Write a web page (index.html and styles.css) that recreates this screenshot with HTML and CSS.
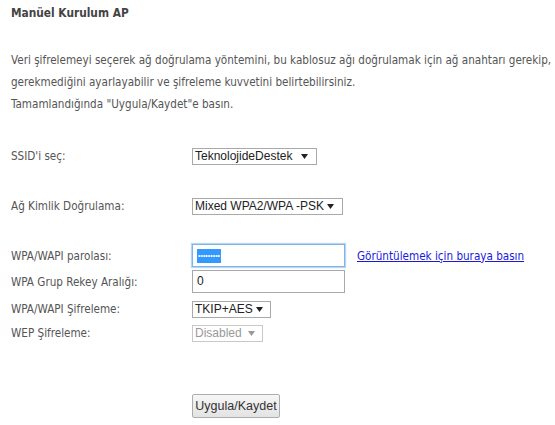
FILE: index.html
```html
<!DOCTYPE html>
<html lang="tr">

<head>
	<meta charset="UTF-8">
	<meta name="viewport" content="width=device-width, initial-scale=1.0">
	<title>Manüel Kurulum AP</title>
	<link rel="stylesheet" href="styles.css">
</head>

<body>
	<h3 class="title">Manüel Kurulum AP</h3>

	<p class="intro">
		Veri şifrelemeyi seçerek ağ doğrulama yöntemini, bu kablosuz ağı doğrulamak için ağ anahtarı gerekip,<br>
		gerekmediğini ayarlayabilir ve şifreleme kuvvetini belirtebilirsiniz.<br>
		Tamamlandığında "Uygula/Kaydet"e basın.
	</p>

	<form class="form">
		<div class="row row-ssid">
			<span class="label">SSID'i seç:</span>
			<div class="sel sel-ssid">
				<span>TeknolojideDestek</span>
				<svg class="arrow" width="7" height="5" viewBox="0 0 7 5"><path d="M0 0H7L3.5 5Z" /></svg>
			</div>
		</div>

		<div class="row row-auth">
			<span class="label">Ağ Kimlik Doğrulama:</span>
			<div class="sel sel-auth">
				<span>Mixed WPA2/WPA -PSK</span>
				<svg class="arrow" width="7" height="5" viewBox="0 0 7 5"><path d="M0 0H7L3.5 5Z" /></svg>
			</div>
		</div>

		<div class="row row-key">
			<span class="label">WPA/WAPI parolası:</span>
			<div class="field field-focus">
				<span class="picked">•••••••••</span>
			</div>
			<a class="show-link" href="#">Görüntülemek için buraya basın</a>
		</div>

		<div class="row row-rekey">
			<span class="label">WPA Grup Rekey Aralığı:</span>
			<div class="field">0</div>
		</div>

		<div class="row row-enc">
			<span class="label">WPA/WAPI Şifreleme:</span>
			<div class="sel sel-enc">
				<span>TKIP+AES</span>
				<svg class="arrow" width="7" height="5" viewBox="0 0 7 5"><path d="M0 0H7L3.5 5Z" /></svg>
			</div>
		</div>

		<div class="row row-wep">
			<span class="label">WEP Şifreleme:</span>
			<div class="sel sel-wep sel-off">
				<span>Disabled</span>
				<svg class="arrow" width="7" height="5" viewBox="0 0 7 5"><path d="M0 0H7L3.5 5Z" /></svg>
			</div>
		</div>

		<div class="row row-save">
			<span class="label"></span>
			<button class="save" type="button">Uygula/Kaydet</button>
		</div>
	</form>
</body>

</html>
```

FILE: styles.css
```css
body {
	margin: 0;
	padding: 4px 0 0 11px;
	background-color: #fff;
	color: #555;
	font-family: "DejaVu Sans Condensed", "DejaVu Sans", sans-serif;
	font-stretch: condensed;
	font-size: 11.6px;
}

.title {
	margin: 0;
	font-size: 11.8px;
	line-height: 18px;
	font-weight: bold;
	color: #444;
}

.intro {
	margin: 27px 0 0 0;
	line-height: 22px;
	white-space: nowrap;
}

.form {
	margin-top: 31px;
}

.row {
	display: flex;
	align-items: center;
}

.label {
	width: 181px;
	flex-shrink: 0;
}

.row-ssid {
	height: 20px;
}

.row-auth {
	height: 20px;
	margin-top: 30px;
}

.row-key {
	height: 25px;
	margin-top: 27px;
}

.row-rekey {
	height: 25px;
	margin-top: 1px;
}

.row-enc {
	height: 20px;
	margin-top: 5px;
}

.row-wep {
	height: 20px;
	margin-top: 4px;
}

.row-save {
	margin-top: 51px;
}

/* select boxes */
.sel {
	display: flex;
	align-items: center;
	justify-content: space-between;
	box-sizing: border-box;
	height: 17px;
	padding: 0 5px 0 2px;
	border: 1px solid #a9a9a9;
	background-color: #fff;
	color: #222;
	font-family: "Liberation Sans", Arial, sans-serif;
	font-size: 12px;
	line-height: 15px;
	white-space: nowrap;
}

.arrow {
	flex-shrink: 0;
	fill: #222;
}

.sel-ssid {
	width: 125px;
	padding-right: 8px;
}

.sel-auth {
	width: 151px;
	padding-right: 8px;
}

.sel-enc {
	width: 79px;
	padding-right: 7px;
}

.sel-wep {
	width: 71px;
	padding-right: 7px;
}

.sel-off {
	color: #999;
	border-color: #c8c8c8;
}

.sel-off .arrow {
	fill: #999;
}

/* text fields */
.field {
	box-sizing: border-box;
	width: 153px;
	height: 23px;
	padding: 0 4px;
	border: 1px solid #a9a9a9;
	background-color: #fff;
	color: #222;
	font-family: "Liberation Sans", Arial, sans-serif;
	font-size: 12px;
	line-height: 21px;
}

.field-focus {
	border-color: #7eb4ea;
	box-shadow: 0 0 1px 1px #b9d6f3;
}

.picked {
	display: inline-block;
	padding: 0 1px;
	background-color: #3399ff;
	color: #fff;
	font-size: 7px;
	line-height: 14px;
	vertical-align: middle;
}

.show-link {
	margin-left: 12px;
	color: #1a1add;
}

.save {
	box-sizing: border-box;
	width: 88px;
	height: 24px;
	padding: 0;
	border: 1px solid #adadad;
	border-radius: 2px;
	background: linear-gradient(#f6f6f6, #e3e3e3);
	color: #333;
	font-family: "Liberation Sans", Arial, sans-serif;
	font-size: 12.5px;
}
```
